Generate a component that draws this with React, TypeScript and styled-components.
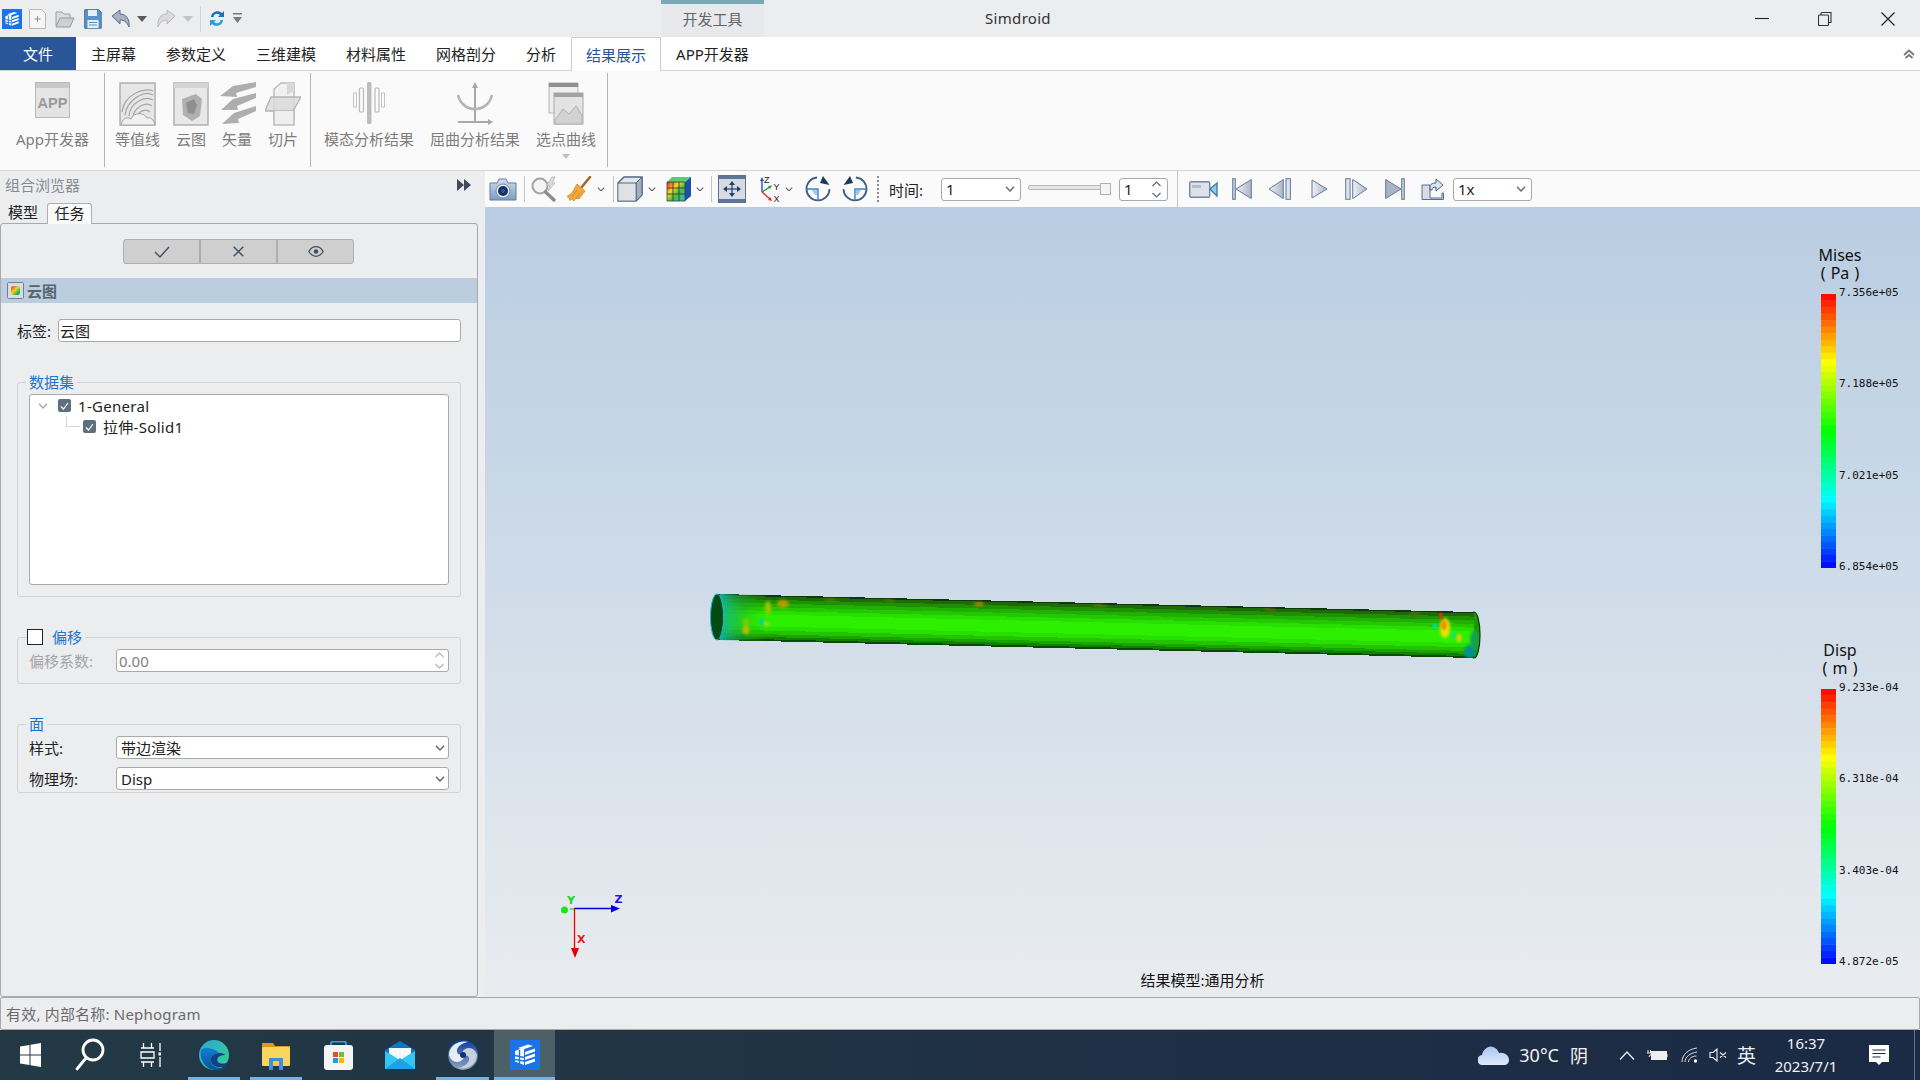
import React from "react";
import styled, { createGlobalStyle } from "styled-components";

const GlobalStyle = createGlobalStyle`
  html, body { margin: 0; padding: 0; background: #ecedef; }
  * { box-sizing: border-box; }
  body { font-family: "Noto Sans", "Noto Sans CJK SC", sans-serif; font-size: 15px; color: #222; }
`;

const Root = styled.div`
  width: 1920px; height: 1080px; display: flex; flex-direction: column; overflow: hidden;
`;
const TitleBar = styled.div`
  height: 37px; display: flex; background: #ecedef; flex: none;
`;
const QuickAccess = styled.div`
  width: 661px; display: flex; align-items: center; padding-left: 2px;
`;
const QuickButton = styled.span<{ $w: number; $ml?: number }>`
  width: ${p => p.$w}px; margin-left: ${p => p.$ml ?? 0}px; display: flex; justify-content: center; align-items: center; flex: none;
`;
const QuickSep = styled.span<{ $ml: number }>`
  width: 1px; height: 26px; margin-left: ${p => p.$ml}px; background: #cfd1d4; flex: none;
`;
const ContextTab = styled.div`
  width: 103px; border-top: 4px solid #79a9b6; background: #e7e9ec; color: #666; display: flex;
  align-items: center; justify-content: center; font-size: 15px; padding-bottom: 5px;
`;
const AppTitle = styled.div`
  width: 508px; display: flex; align-items: center; justify-content: center; color: #333; font-size: 15px; letter-spacing: .3px; padding-bottom: 1px;
`;
const WindowButtons = styled.div`
  margin-left: auto; display: flex; padding-right: 1px;
`;
const WindowButton = styled.div`
  width: 63px; height: 37px; display: flex; align-items: center; justify-content: center;
`;
const TabRow = styled.div`
  height: 34px; flex: none; display: flex; background: #fff; border-bottom: 1px solid #d5d5d5; position: relative;
`;
const FileTab = styled.div`
  width: 76px; height: 33px; background: #2a5599; color: #fff; display: flex; align-items: center; justify-content: center;
`;
const RibbonTab = styled.div<{ $active?: boolean }>`
  height: ${p => (p.$active ? 34 : 33)}px; padding: 0 ${p => (p.$active ? 14 : 15)}px; display: flex; align-items: center; flex: none;
  color: ${p => (p.$active ? "#2a5599" : "#222")}; background: #fff;
  border-left: ${p => (p.$active ? "1px solid #cfcfcf" : "none")};
  border-right: ${p => (p.$active ? "1px solid #cfcfcf" : "none")};
  border-top: ${p => (p.$active ? "1px solid #cfcfcf" : "none")};
`;
const CollapseButton = styled.div`
  margin-left: auto; margin-right: 5px; display: flex; align-items: center;
`;
const Ribbon = styled.div`
  height: 100px; flex: none; display: flex; background: #fafafa; border-bottom: 1px solid #d4d4d4; padding-top: 2px; padding-bottom: 3px;
`;
const RibbonGroup = styled.div<{ $w: number; $pl: number }>`
  width: ${p => p.$w}px; padding-left: ${p => p.$pl}px; display: flex; gap: 16px; border-right: 1px solid #b5b5b5; flex: none;
`;
const RibbonItem = styled.div`
  display: flex; flex-direction: column; align-items: center; color: #7d7d7d; font-size: 15px; flex: none; position: relative;
`;
const RibbonIconBox = styled.div`
  width: 0; height: 45px; margin-top: 9px; display: flex; align-items: flex-start; justify-content: center;
  & > svg { flex: none; }
`;
const RibbonLabel = styled.div`
  line-height: 22px; margin-top: 1px; white-space: nowrap;
`;
const RibbonCaret = styled.div`
  width: 0; height: 0; border-left: 4px solid transparent; border-right: 4px solid transparent; border-top: 5px solid #bdbdbd; margin-top: 4px;
`;
const Main = styled.div`
  height: 826px; flex: none; display: flex; background: #ecedef;
`;
const Panel = styled.div`
  width: 478px; flex: none; display: flex; flex-direction: column;
`;
const PanelHeader = styled.div`
  height: 29px; display: flex; align-items: center; justify-content: space-between; padding: 0 7px 2px 5px; color: #858b92; flex: none;
`;
const PanelTabs = styled.div`
  height: 24px; display: flex; align-items: flex-end; padding-left: 8px; flex: none; position: relative; z-index: 1;
`;
const PanelTab = styled.div<{ $active?: boolean }>`
  width: ${p => (p.$active ? 45 : 39)}px; height: 21px; line-height: 19px; text-align: ${p => (p.$active ? "center" : "left")};
  background: ${p => (p.$active ? "#fafafa" : "transparent")}; color: #222;
  border: ${p => (p.$active ? "1px solid #b0b0b0" : "none")}; border-bottom: none; border-radius: 3px 3px 0 0;
`;
const PanelBox = styled.div`
  margin-top: -1px; width: 478px; flex: 1; border: 1px solid #aaa; border-radius: 3px; padding-top: 15px; display: flex; flex-direction: column; min-height: 0;
`;
const ButtonGroup = styled.div`
  width: 231px; height: 25px; margin-left: 122px; display: flex; background: #cfcfcf; border: 1px solid #aeaeae; border-radius: 3px; flex: none;
`;
const TaskButton = styled.div`
  flex: 1; display: flex; align-items: center; justify-content: center;
  & + & { border-left: 2px solid #aeaeae; }
`;
const TaskHeader = styled.div`
  height: 25px; margin-top: 14px; background: #bacee0; display: flex; align-items: center; gap: 3px; padding-left: 6px; color: #5a646f; font-weight: 700; flex: none;
`;
const LabelRow = styled.div`
  height: 23px; margin: 16px 16px 0 16px; display: flex; align-items: center; flex: none;
`;
const RowLabel = styled.div<{ $w: number; $disabled?: boolean }>`
  width: ${p => p.$w}px; flex: none; color: ${p => (p.$disabled ? "#a5a5a5" : "#222")};
`;
const Field = styled.div<{ $muted?: boolean; $pl: number }>`
  flex: 1; height: 23px; background: #fff; border: 1px solid #a9a9a9; border-radius: 3px; display: flex; align-items: center; justify-content: space-between;
  padding: 0 3px 0 ${p => p.$pl}px; color: ${p => (p.$muted ? "#808080" : "#222")}; min-width: 0;
`;
const Group = styled.fieldset<{ $h: number; $mt: number }>`
  height: ${p => p.$h}px; margin: ${p => p.$mt}px 16px 0 16px; padding: 0 11px; border: 1px solid #d0d2d5; border-radius: 3px; min-width: 0; flex: none; display: block;
`;
const GroupLegend = styled.legend<{ $check?: boolean }>`
  height: 20px; line-height: 20px; padding: 0 3px; margin-left: ${p => (p.$check ? -2 : -3)}px; color: #1d74cc; display: flex; align-items: center; gap: 9px; margin-bottom: 0;
`;
const PlainBox = styled.span`
  width: 16px; height: 16px; background: #fff; border: 1px solid #222; flex: none; margin-left: -3px;
`;
const Tree = styled.div`
  height: 191px; margin-top: 2px; background: #fff; border: 1px solid #aaa; border-radius: 3px; letter-spacing: .3px;
`;
const TreeRow = styled.div<{ $indent: number }>`
  height: 21px; display: flex; align-items: center; padding-left: ${p => p.$indent}px; position: relative;
`;
const TreeToggle = styled.span`
  width: 20px; display: flex; flex: none;
`;
const TreeLine = styled.span`
  width: 14px; height: 11px; margin-top: -11px; border-left: 1px solid #d6d6d6; border-bottom: 1px solid #d6d6d6; margin-right: 3px; flex: none;
`;
const TreeCheck = styled.span`
  width: 13px; height: 13px; background: #5f6f7c; border-radius: 2px; margin-right: 7px; display: flex; align-items: center; justify-content: center; flex: none;
`;
const FormRow = styled.div<{ $mt: number }>`
  height: 23px; margin-top: ${p => p.$mt}px; display: flex; align-items: center;
`;
const StatusBar = styled.div`
  height: 33px; flex: none; background: #ecedef; border: 1px solid #a9a9a9; border-radius: 2px; display: flex; align-items: center; padding-left: 5px; color: #6a6a6a; letter-spacing: .2px;
`;
const Gutter = styled.div`
  width: 7px; flex: none;
`;
const Workspace = styled.div`
  flex: 1; display: flex; flex-direction: column; min-width: 0;
`;
const Toolbar = styled.div`
  height: 36px; flex: none; background: #fafafa; display: flex; align-items: center;
`;
const ToolButton = styled.span<{ $w: number; $ml: number }>`
  width: ${p => p.$w}px; margin-left: ${p => p.$ml}px; display: flex; align-items: center; justify-content: center; flex: none;
`;
const ToolSep = styled.span<{ $ml: number; $dotted?: boolean; $h?: number }>`
  width: 0; height: ${p => p.$h ?? 26}px; margin-left: ${p => p.$ml}px; border-left: ${p => (p.$dotted ? "2px dotted #8a8a8a" : "1px solid #c4c4c4")}; flex: none;
`;
const ToolLabel = styled.span<{ $ml: number }>`
  margin-left: ${p => p.$ml}px; width: 34px; flex: none; white-space: nowrap;
`;
const ToolCombo = styled.div<{ $w: number; $ml: number }>`
  width: ${p => p.$w}px; margin-left: ${p => p.$ml}px; height: 23px; background: #fff; border: 1px solid #a9a9a9; border-radius: 3px;
  display: flex; align-items: center; justify-content: space-between; padding: 0 5px 0 4px; flex: none;
`;
const Slider = styled.div`
  width: 83px; margin-left: 7px; height: 14px; position: relative; flex: none; display: flex; align-items: center; justify-content: flex-end;
  &::before { content: ""; position: absolute; left: 0; right: 0; top: 3px; height: 3px; background: #e6e6e6; border: 1px solid #b9b9b9; border-radius: 2px; }
`;
const SliderThumb = styled.span`
  width: 11px; height: 12px; background: #f4f4f4; border: 1px solid #b0b0b0; position: relative;
`;
const Viewport = styled.div`
  flex: 1; position: relative; background: linear-gradient(180deg, #b9cde2 0%, #d1dde9 52%, #e9ecef 100%); overflow: hidden;
`;
const TubeCanvas = styled.svg`
  position: absolute; left: 225px; top: 380px;
`;
const TriadCanvas = styled.svg`
  position: absolute; left: 65px; top: 674px;
`;
const Caption = styled.div`
  position: absolute; left: 0; right: 0; bottom: 7px; text-align: center; color: #111; font-size: 15px;
`;
const Legend = styled.div<{ $top: number }>`
  position: absolute; left: 1315px; top: ${p => p.$top}px; width: 80px;
`;
const LegendTitle = styled.div`
  height: 36px; text-align: center; line-height: 18px; font-size: 16px; color: #111; width: 80px; word-spacing: 1px;
`;
const LegendBody = styled.div`
  margin-top: 12px; display: flex; padding-left: 21px;
`;
const LegendLabels = styled.div<{ $h: number }>`
  height: ${p => p.$h}px; margin: -8px 0 0 3px; display: flex; flex-direction: column; justify-content: space-between;
  font-family: "DejaVu Sans Mono", monospace; font-size: 11px; line-height: 14px; color: #111; white-space: nowrap;
`;
const Taskbar = styled.div`
  height: 50px; flex: none; display: flex; align-items: stretch; color: #fff;
  background: linear-gradient(90deg, #233a45 0%, #1f3145 50%, #1b2a45 100%);
`;
const TaskSlot = styled.div<{ $w: number; $ml?: number; $state?: "open" | "active" }>`
  width: ${p => p.$w}px; margin-left: ${p => p.$ml ?? 0}px; flex: none; display: flex; align-items: center; justify-content: center; position: relative;
  background: ${p => (p.$state === "active" ? "#4c6068" : "transparent")};
  ${p => (p.$state ? `&::after { content: ""; position: absolute; bottom: 0; height: 3px; background: #76b3e2; left: ${p.$state === "active" ? 0 : 5}px; right: ${p.$state === "active" ? 0 : 5}px; }` : "")}
`;
const Tray = styled.div`
  margin-left: auto; display: flex; align-items: center; padding-right: 5px; border-right: 1px solid #6a7480; margin-right: 5px; height: 50px;
`;
const TrayItem = styled.span<{ $ml: number }>`
  margin-left: ${p => p.$ml}px; display: flex; align-items: center; flex: none;
`;
const TrayText = styled.span<{ $ml: number; $size: number }>`
  margin-left: ${p => p.$ml}px; font-size: ${p => p.$size}px; flex: none; white-space: nowrap; color: #f2f2f2;
`;
const Clock = styled.div`
  margin-left: 18px; width: 64px; text-align: center; font-size: 15px; line-height: 23px; white-space: nowrap; flex: none; color: #f2f2f2;
`;

/* ----- small chevrons ----- */
const Chevron = ({ size = 9, color = "#5c6a7c", up = false }: { size?: number; color?: string; up?: boolean }) => (
  <svg width={size} height={size * 0.6} viewBox="0 0 10 6"><path d={up ? "M1 5.2 5 1l4 4.2" : "M1 .8 5 5l4-4.2"} fill="none" stroke={color} strokeWidth="1.4" /></svg>
);
const Spinner = ({ color }: { color: string }) => (
  <svg width="11" height="19" viewBox="0 0 11 19"><path d="M1.5 6 5.5 2l4 4M1.5 13l4 4 4-4" fill="none" stroke={color} strokeWidth="1.2" /></svg>
);

/* ----- logo ----- */
const SimLogo = ({ s }: { s: number }) => (
  <svg width={s} height={s} viewBox="0 0 30 30">
    <rect width="30" height="30" fill="#1a73e8" />
    <path d="M5 11 14 7.5V25L5 21.5Z" fill="#fff" />
    <path d="M8 8 18 4.5l5 1.5-10 3.5Z" fill="#fff" />
    <path d="M5 15.5l9 2M5 19.5l9 1.5M9.5 10v14" stroke="#1a73e8" strokeWidth="1.4" fill="none" />
    <path d="M15 12l10-3.5v3L15 15ZM15 17l10-3.5v3L15 20ZM15 22l10-3.5v3L15 25Z" fill="#fff" />
  </svg>
);

/* ----- ribbon icons (disabled, grey) ----- */
const AppIcon = () => (
  <svg width="35" height="36" viewBox="0 0 35 36">
    <rect x=".5" y=".5" width="34" height="35" fill="#e4e4e4" stroke="#b9b9b9" />
    <rect x="1" y="1" width="33" height="5" fill="#c9c9c9" />
    <text x="17.5" y="26" textAnchor="middle" fontFamily="Liberation Sans" fontSize="14.5" fontWeight="700" fill="#9a9a9a">APP</text>
  </svg>
);
const ContourIcon = () => (
  <svg width="37" height="44" viewBox="0 0 37 44">
    <rect x="1" y="1" width="35" height="42" fill="#e6e6e6" stroke="#b0b0b0" strokeWidth="1.5" />
    <g fill="none" stroke="#a8a8a8" strokeWidth="1.3">
      <path d="M3 30C5 12 26 5 34 9" /><path d="M6 33C8 17 26 8 34 13" /><path d="M10 34C11 21 26 13 34 18" /><path d="M14 35C15 26 26 19 33 24" /><path d="M18 36c1-7 9-10 13-6" />
    </g>
    <path d="M2 43c1-6 6-9 10-6 3-7 13-7 16-1 3-1 7 1 8 7Z" fill="#f1f1f1" stroke="#a2a2a2" />
  </svg>
);
const NephIcon = () => (
  <svg width="36" height="44" viewBox="0 0 36 44">
    <rect x="1" y="1" width="34" height="42" fill="#e8e8e8" stroke="#b0b0b0" strokeWidth="1.5" />
    <rect x="1" y="1" width="34" height="5" fill="#d4d4d4" />
    <path d="M9 17 23 12l6 5-2 17-8 5-9-6Z" fill="#b0b0b0" />
    <path d="M13 21 21 17l3 6-3 9-6-1Z" fill="#8f8f8f" />
  </svg>
);
const VectorIcon = () => (
  <svg width="37" height="44" viewBox="0 0 37 44" fill="#aeaeae">
    <path d="M14 4 37 0v5L17 11l1 4L1 14Z" /><path d="M14 17 37 11v5L18 24l1 4L2 28Z" /><path d="M15 31 37 24v5L19 37l1 4-17 1Z" />
  </svg>
);
const SliceIcon = () => (
  <svg width="36" height="44" viewBox="0 0 36 44">
    <path d="M9 7 16 1h13v36H9Z" fill="#f1f1f1" stroke="#bcbcbc" strokeWidth="1.5" />
    <path d="M22 1l7 0v8l-7 4Z" fill="#d8d8d8" />
    <path d="M6 15h30l-8 14H0Z" fill="#d9d9d9" fillOpacity=".8" stroke="#b4b4b4" strokeWidth="1.3" />
    <path d="M9 29v14h20V29" fill="#efefef" stroke="#bcbcbc" strokeWidth="1.5" />
  </svg>
);
const ModalIcon = () => (
  <svg width="32" height="44" viewBox="0 0 32 44" fill="#bcbcbc">
    <rect x="14" y="0" width="4.5" height="42" rx="1.5" />
    <rect x="6.5" y="6" width="4" height="24" rx="1" fill="none" stroke="#b9b9b9" strokeWidth="1.2" />
    <rect x="22" y="6" width="4" height="24" rx="1" fill="none" stroke="#b9b9b9" strokeWidth="1.2" />
    <rect x="0.5" y="11" width="3" height="14" fill="none" stroke="#c4c4c4" />
    <rect x="28.5" y="11" width="3" height="14" fill="none" stroke="#c4c4c4" />
  </svg>
);
const BuckleIcon = () => (
  <svg width="36" height="44" viewBox="0 0 36 44" fill="none" stroke="#a8a8a8" strokeWidth="2">
    <path d="M18 4V40M1 40H33" />
    <path d="M18 0l-3 6h6ZM36 40l-5-3v6Z" fill="#a8a8a8" stroke="none" />
    <path d="M1 13c2 9 9 14 17 14s15-5 17-14" strokeWidth="2.6" stroke="#b4b4b4" />
  </svg>
);
const CurveIcon = () => (
  <svg width="36" height="44" viewBox="0 0 36 44">
    <rect x="1" y="1" width="29" height="30" fill="#efefef" stroke="#b4b4b4" />
    <rect x="1" y="1" width="29" height="4" fill="#8f8f8f" />
    <rect x="6" y="11" width="29" height="31" fill="#e3e3e3" stroke="#a8a8a8" />
    <rect x="6" y="11" width="29" height="4" fill="#a2a2a2" />
    <path d="M7 38 15 27l6 5 7-8 6 9v9H7Z" fill="#d2d2d2" stroke="#b0b0b0" />
  </svg>
);

/* ----- toolbar icons ----- */
const CameraIcon = () => (
  <svg width="28" height="23" viewBox="0 0 28 23">
    <defs><linearGradient id="camB" x1="0" y1="0" x2="0" y2="1"><stop offset="0" stopColor="#cfdded" /><stop offset="1" stopColor="#7f9cc0" /></linearGradient></defs>
    <path d="M1 5h7l2-4h7l2 4h8v17H1Z" fill="url(#camB)" stroke="#5f7fa6" />
    <circle cx="14" cy="13" r="7" fill="#e8eef5" stroke="#6d89ab" />
    <circle cx="14" cy="13" r="5" fill="#17315f" />
    <circle cx="14" cy="13" r="2" fill="#2a58a8" />
  </svg>
);
const SearchBoltIcon = () => (
  <svg width="28" height="26" viewBox="0 0 28 26">
    <circle cx="10" cy="10" r="7.5" fill="#f5f5f5" stroke="#a3a3a3" strokeWidth="2" />
    <path d="M15.5 16 24 24" stroke="#8c8c8c" strokeWidth="3.4" strokeLinecap="round" />
    <path d="M22 1l-5 8h3l-2 6 7-8h-3l3-6Z" fill="#dedede" stroke="#bdbdbd" />
  </svg>
);
const BroomIcon = () => (
  <svg width="25" height="26" viewBox="0 0 25 26">
    <path d="M14 12 23 1" stroke="#a56a2b" strokeWidth="2.6" strokeLinecap="round" />
    <path d="M10 8 18 15 12 23 9 22 7 25 5 23 3 24.5 2 22 0 20.5 5 17Z" fill="#f2a93b" stroke="#d98a1e" strokeWidth=".8" />
    <path d="M5 21 10 14M9 23l4-6" stroke="#d98a1e" />
  </svg>
);
const BoxIcon = () => (
  <svg width="26" height="26" viewBox="0 0 26 26">
    <path d="M1 7 7 1h18v18l-6 6H1Z" fill="#e4e6ea" stroke="#4d6687" strokeWidth="1.4" />
    <path d="M19 7 25 1v18l-6 6Z" fill="#a3aebd" stroke="#4d6687" />
    <path d="M1 7h18v18" fill="none" stroke="#4d6687" />
    <path d="M1.5 8h17v16.5h-17Z" fill="#dfe1e5" />
  </svg>
);
const RainbowCube = () => (
  <svg width="26" height="26" viewBox="0 0 26 26">
    <defs><linearGradient id="rbw" x1="0" y1="0" x2="1" y2="1">
      <stop offset="0" stopColor="#e8272a" /><stop offset=".35" stopColor="#f7d42a" /><stop offset=".6" stopColor="#3dc23b" /><stop offset="1" stopColor="#2dbbe0" />
    </linearGradient></defs>
    <path d="M1 6h18v19H1Z" fill="url(#rbw)" />
    <path d="M1 6 6 1h19l-6 5Z" fill="#5fcb6a" />
    <path d="M19 6l6-5v19l-6 5Z" fill="#1b4fb0" />
    <path d="M7 6v19M13 6v19M1 12h18M1 18h18" stroke="#3a3a3a" strokeWidth=".9" fill="none" />
    <path d="M1 6h18v19H1Z" fill="none" stroke="#3a3a3a" strokeWidth=".8" />
  </svg>
);
const FitIcon = () => (
  <svg width="28" height="28" viewBox="0 0 28 28">
    <rect x=".5" y=".5" width="27" height="27" fill="#d7dbe2" stroke="#5a7195" />
    <rect x="1" y="1" width="26" height="3" fill="#5f7697" />
    <rect x="1" y="24" width="26" height="3" fill="#5f7697" />
    <g fill="#1f3f6e">
      <path d="M14 6l-3 4h6ZM14 22l-3-4h6ZM5 14l4-3v6ZM23 14l-4-3v6Z" />
      <rect x="13.4" y="9" width="1.2" height="10" /><rect x="8" y="13.4" width="12" height="1.2" />
    </g>
  </svg>
);
const AxesIcon = () => (
  <svg width="24" height="29" viewBox="0 0 24 29">
    <path d="M4 17V5" stroke="#2b55c8" strokeWidth="1.4" /><path d="M4 2 2 6h4Z" fill="#2b55c8" />
    <path d="M4 17 12 12" stroke="#1c9c3c" strokeWidth="1.4" /><path d="M14 10.500l-4 .5 2 3Z" fill="#1c9c3c" />
    <path d="M4 17 12 24" stroke="#d9302e" strokeWidth="1.4" /><path d="M14 26l-1.500-4-2.500 3Z" fill="#d9302e" />
    <g fontFamily="Liberation Sans" fontSize="9" fill="#222">
      <text x="6" y="8">Z</text><text x="15.500" y="15">Y</text><text x="15.500" y="27">X</text>
    </g>
  </svg>
);
const RotIcon = ({ flip }: { flip?: boolean }) => (
  <svg width="26" height="26" viewBox="0 0 26 26" style={flip ? { transform: "scaleX(-1)" } : undefined}>
    <path d="M12 1.5A11.5 11.5 0 1 0 24.5 13" fill="none" stroke="#3d5f86" strokeWidth="1.8" />
    <path d="M1.5 13H13V24.5" fill="none" stroke="#3d82b8" strokeWidth="1.4" />
    <path d="M7 14h5v5h-2Z" fill="#9fc6e6" />
    <path d="M24.5 9 15 7l3-7Z" fill="#1e3a60" />
  </svg>
);
const MovieIcon = () => (
  <svg width="29" height="17" viewBox="0 0 29 17">
    <rect x=".7" y=".7" width="20" height="15.6" rx="1.5" fill="#dde2e9" stroke="#7186a3" strokeWidth="1.4" />
    <rect x="3" y="4" width="9" height="3" fill="#b4bdc9" />
    <path d="M21 8 28 2v13Z" fill="#8fd0e6" stroke="#3f7da8" strokeWidth="1.4" />
  </svg>
);
const PG = () => (
  <defs><linearGradient id="pgr" x1="0" y1="0" x2="1" y2="0"><stop offset="0" stopColor="#f0f3f7" /><stop offset="1" stopColor="#aab4c4" /></linearGradient></defs>
);
const PlayFirst = () => (
  <svg width="20" height="22" viewBox="0 0 20 22"><PG /><rect x=".7" y=".7" width="2.6" height="20.6" fill="#c9d1dc" stroke="#62799b" /><path d="M19.3 1.5V20.5L4 11Z" fill="url(#pgr)" stroke="#62799b" /></svg>
);
const PlayPrev = () => (
  <svg width="23" height="22" viewBox="0 0 23 22"><PG /><path d="M15.3 1.5V20.5L1 11Z" fill="url(#pgr)" stroke="#62799b" /><rect x="18" y=".7" width="4.4" height="20.6" fill="#dde2e9" stroke="#62799b" /></svg>
);
const PlayPlay = () => (
  <svg width="17" height="20" viewBox="0 0 17 20"><PG /><path d="M1 1V19L16 10Z" fill="url(#pgr)" stroke="#62799b" /></svg>
);
const PlayNext = () => (
  <svg width="23" height="22" viewBox="0 0 23 22"><PG /><rect x=".7" y=".7" width="4.4" height="20.6" fill="#dde2e9" stroke="#62799b" /><path d="M7.7 1.5V20.5L22 11Z" fill="url(#pgr)" stroke="#62799b" /></svg>
);
const PlayLast = () => (
  <svg width="20" height="22" viewBox="0 0 20 22"><PG /><path d="M.7 1.5V20.5L16 11Z" fill="#a9b3c2" stroke="#62799b" /><rect x="16.7" y=".7" width="2.6" height="20.6" fill="#c9d1dc" stroke="#62799b" /></svg>
);
const ExportIcon = () => (
  <svg width="23" height="22" viewBox="0 0 23 22">
    <path d="M1 7h8v13h12v-5h1.5v6.500H1Z" fill="#d6dce5" stroke="#56708f" />
    <path d="M9 9c0-3 3-4 6-4V1l7 6-7 6V9c-3 0-4 1-4 3H9Z" fill="#dfe5ec" stroke="#3f6187" />
  </svg>
);

/* ----- quick access icons ----- */
const NewIcon = () => (
  <svg width="17" height="20" viewBox="0 0 17 20"><path d="M.5.5h12l4 4v15H.5Z" fill="#f6f6f6" stroke="#b8b8b8" /><path d="M8.500 7v6M5.500 10h6" stroke="#8f8f8f" /></svg>
);
const OpenIcon = () => (
  <svg width="20" height="18" viewBox="0 0 20 18"><path d="M1 16V2h6l2 2h6v4" fill="#dbdbdb" stroke="#a0a0a0" /><path d="M1 17 5 8h14l-4 9Z" fill="#cfcfcf" stroke="#9a9a9a" /></svg>
);
const SaveIcon = () => (
  <svg width="18" height="20" viewBox="0 0 18 20"><path d="M.7.700h14l2.500 2.500v16H.7Z" fill="#5d92c7" stroke="#3a6ea5" /><rect x="4" y="1" width="9" height="6" fill="#e6eef6" /><rect x="3.500" y="11" width="11" height="8" fill="#e6eef6" /><path d="M5 13.500h8M5 16h8" stroke="#5d92c7" /></svg>
);
const UndoIcon = ({ flip, dim }: { flip?: boolean; dim?: boolean }) => (
  <svg width="20" height="20" viewBox="0 0 20 20" style={flip ? { transform: "scaleX(-1)" } : undefined}>
    <path d="M1 7 9 1v4c6 0 10 5 9 13-2-5-5-7-9-7v4Z" fill={dim ? "#dcdcdc" : "#a6b1c1"} stroke={dim ? "#b9b9b9" : "#5b6e89"} />
  </svg>
);
const TinyCaret = ({ color }: { color: string }) => (
  <svg width="10" height="6" viewBox="0 0 10 6"><path d="M0 0h10L5 6Z" fill={color} /></svg>
);
const RefreshIcon = () => (
  <svg width="16" height="19" viewBox="0 0 16 19">
    <path d="M2 8C2 3 9 0 13 4l2-2v6H9l2-2C8 3.500 4.500 5 4.500 8Z" fill="#1c6fb3" />
    <path d="M14 11c0 5-7 8-11 4l-2 2v-6h6l-2 2c3 2.500 6.500 1 6.500-2Z" fill="#2a9fd0" />
  </svg>
);
const Customize = () => (
  <svg width="9" height="11" viewBox="0 0 9 11"><path d="M0 0h9v1.500H0ZM0 4h9L4.500 10Z" fill="#7a7a7a" /></svg>
);

/* ----- taskbar icons ----- */
const WinLogo = () => (
  <svg width="21" height="24" viewBox="0 0 21 24" fill="#fff"><path d="M0 3.500 9.500 2v9.500H0ZM10.500 1.800 21 0v11.500H10.500ZM0 12.500h9.500V22L0 20.500ZM10.500 12.500H21V24L10.500 22.200Z" /></svg>
);
const SearchGlass = () => (
  <svg width="30" height="34" viewBox="0 0 30 34" fill="none" stroke="#fff" strokeWidth="2.800"><circle cx="18" cy="12" r="10" /><path d="M11 20 2 31" strokeLinecap="round" /></svg>
);
const TaskView = () => (
  <svg width="21" height="24" viewBox="0 0 21 24" fill="none" stroke="#fff" strokeWidth="1.300"><path d="M1 5h13M3.500 5V0M11.500 5V0M1 9h13v6H1ZM1 19h13M3.500 19v5M11.500 19v5M20 0v8M20 14v10" /><rect x="18.500" y="9.500" width="3" height="3" fill="#fff" stroke="none" /></svg>
);
const EdgeIcon = () => (
  <svg width="30" height="30" viewBox="0 0 30 30">
    <defs>
      <linearGradient id="edA" x1="0" y1="0" x2="1" y2="1"><stop offset="0" stopColor="#2aa8d8" /><stop offset="1" stopColor="#35d28a" /></linearGradient>
      <linearGradient id="edB" x1="0" y1="0" x2="0" y2="1"><stop offset="0" stopColor="#0f7fcf" /><stop offset="1" stopColor="#0b4f9e" /></linearGradient>
    </defs>
    <circle cx="15" cy="15" r="15" fill="url(#edA)" />
    <path d="M2 10C0 20 7 30 17 30c4 0 7-1 9-3-5 2-13 1-14-6-1-4 3-8 8-8-3-4-14-7-18-3Z" fill="url(#edB)" />
    <path d="M20 13c-5 0-9 4-8 8 1 6 8 7 13 6 2-2 3-3 4-5-3 2-8 2-10 0-2-3 0-7 7-7 0-1-3-2-6-2Z" fill="#123f86" />
  </svg>
);
const FolderIcon = () => (
  <svg width="28" height="29" viewBox="0 0 28 29">
    <path d="M0 2h11l2 3h15v5H0Z" fill="#d89a1a" />
    <rect y="6" width="28" height="19" rx="1.500" fill="#fbd65f" />
    <path d="M7 17h14v12h-4v-4h-6v4H7Z" fill="#3f8fd6" />
    <rect x="11" y="20" width="6" height="5" fill="#f6c847" />
  </svg>
);
const StoreIcon = () => (
  <svg width="29" height="29" viewBox="0 0 29 29">
    <path d="M7 6V2.500a2 2 0 0 1 2-2h11a2 2 0 0 1 2 2V6" fill="none" stroke="#29a7e0" strokeWidth="1.800" />
    <rect y="4" width="29" height="25" rx="3" fill="#f4f4f4" />
    <rect x="9" y="11" width="5" height="5" fill="#ea4c2b" /><rect x="15" y="11" width="5" height="5" fill="#7db83a" />
    <rect x="9" y="17" width="5" height="5" fill="#18a1e8" /><rect x="15" y="17" width="5" height="5" fill="#fbb414" />
  </svg>
);
const MailIcon = () => (
  <svg width="30" height="28" viewBox="0 0 30 28">
    <path d="M0 9 15 0l15 9v19H0Z" fill="#0f74c6" />
    <path d="M4 7h22v6l-11 7-11-7Z" fill="#f5f8fb" />
    <path d="M0 10 15 19 30 10v18H0Z" fill="#31c6f3" />
    <path d="M0 28 15 17 30 28Z" fill="#1da2e6" />
  </svg>
);
const SwirlIcon = () => (
  <svg width="30" height="30" viewBox="0 0 30 30">
    <defs><linearGradient id="swl" x1="0" y1="0" x2="0" y2="1"><stop offset="0" stopColor="#0b3ea2" /><stop offset="1" stopColor="#8fa3bf" /></linearGradient></defs>
    <circle cx="15" cy="15" r="15" fill="url(#swl)" />
    <path d="M1 15C1 6 10 0 20 2c-6 1-12 5-11 10 1 4 6 3 7-1 2 5-1 11-7 11-4 0-7-3-8-7Z" fill="#e8edf3" />
    <path d="M29 15c0 9-9 15-19 13 6-1 12-5 11-10-1-4-6-3-7 1-2-5 1-11 7-11 4 0 7 3 8 7Z" fill="#c8d0dc" />
    <circle cx="15" cy="15" r="3" fill="#10307c" />
  </svg>
);

/* ----- tray icons ----- */
const CloudIcon = () => (
  <svg width="31" height="20" viewBox="0 0 31 20"><defs><linearGradient id="cld" x1="0" y1="0" x2="0" y2="1"><stop offset="0" stopColor="#a7c8f2" /><stop offset="1" stopColor="#dfeaf8" /></linearGradient></defs>
    <path d="M5 20a5 5 0 0 1-1-10C5 4 11 0 15 2c3 1 5 3 6 6 5-1 10 2 10 7 0 3-2 5-5 5Z" fill="url(#cld)" /></svg>
);
const TrayChevron = () => (
  <svg width="16" height="9" viewBox="0 0 16 9" fill="none" stroke="#eee" strokeWidth="1.300"><path d="M1 8.500 8 1l7 7.500" /></svg>
);
const BatteryIcon = () => (
  <svg width="21" height="14" viewBox="0 0 21 14" fill="none" stroke="#eee"><rect x="4.500" y="3.500" width="15" height="8" fill="#eee" /><path d="M20 6v3M1 2v3M3.500 2v3M0 5h4.500v2H3L2 9" /></svg>
);
const WifiIcon = () => (
  <svg width="17" height="16" viewBox="0 0 17 16" fill="none" stroke="#ddd" strokeWidth="1"><path d="M1 15C1 8 7 2 16 1M4 15c0-5 5-9 12-10M7.500 15c0-3 3-6 8-6" /><circle cx="14.500" cy="14" r="1.700" fill="#fff" stroke="none" /></svg>
);
const MuteIcon = () => (
  <svg width="18" height="14" viewBox="0 0 18 14" fill="none" stroke="#eee" strokeWidth="1.100"><path d="M1 4.500h3L8 1v12L4 9.500H1ZM11 4.500l6 5M17 4.500l-6 5" /></svg>
);
const NotifyIcon = () => (
  <svg width="20" height="21" viewBox="0 0 20 21"><path d="M0 0h20v17h-7l-3 3-3-3H0Z" fill="#fff" /><path d="M3.500 5h13M3.500 8.500h13M3.500 12h8" stroke="#1b2a45" /></svg>
);

/* ----- viewport drawings ----- */
const bands: [number, string][] = [
  [0, "#0a3a07"], [3, "#1f6a06"], [10, "#1d9004"], [18, "#20b002"], [26, "#24c800"], [34, "#28e000"],
  [42, "#2cf000"], [68, "#28e000"], [77, "#22c400"], [85, "#1aa400"], [91, "#128005"], [96, "#0a4a06"], [100, ""],
];
const L = { t: 594, b: 640, x: 718 };
const R = { t: 612, b: 658, x: 1474 };
const Tube = () => (
  <TubeCanvas width="780" height="80" viewBox="710 587 780 80">
    <defs>
      <clipPath id="tubeClip"><path d="M718 594 1474 612C1480 618 1482 650 1473 658L718 640Z" /></clipPath>
      <linearGradient id="capFade" x1="0" y1="0" x2="1" y2="0">
        <stop offset="0" stopColor="#10b8a8" stopOpacity=".9" /><stop offset=".5" stopColor="#18a840" stopOpacity=".45" /><stop offset="1" stopColor="#20d000" stopOpacity="0" />
      </linearGradient>
      <filter id="b2" x="-100%" y="-100%" width="300%" height="300%"><feGaussianBlur stdDeviation="1.800" /></filter>
      <filter id="b1" x="-100%" y="-100%" width="300%" height="300%"><feGaussianBlur stdDeviation=".9" /></filter>
    </defs>
    <ellipse cx="1474" cy="635" rx="6" ry="23" fill="#1a9a02" stroke="#0a3a07" strokeWidth="1.200" />
    {bands.slice(0, -1).map(([p, c], i) => {
      const a = p / 100;
      const d = bands[i + 1][0] / 100;
      const y = (s: { t: number; b: number }, f: number) => s.t + (s.b - s.t) * f;
      return (
        <polygon key={i} fill={c} shapeRendering="crispEdges"
          points={`${L.x},${y(L, a)} ${R.x},${y(R, a)} ${R.x},${y(R, d)} ${L.x},${y(L, d)}`} />
      );
    })}
    <g clipPath="url(#tubeClip)">
      <rect x="720" y="590" width="46" height="55" fill="url(#capFade)" />
      <g filter="url(#b2)">
        <ellipse cx="783" cy="604" rx="6" ry="4" fill="#b89c00" />
        <ellipse cx="768" cy="608" rx="3" ry="7" fill="#a8c000" />
        <ellipse cx="746" cy="630" rx="3.500" ry="4" fill="#c8b800" />
        <ellipse cx="746" cy="622" rx="3.500" ry="4" fill="#70d000" />
        <ellipse cx="762" cy="622" rx="1.800" ry="4" fill="#00c8b0" />
        <ellipse cx="767" cy="624" rx="2" ry="2.500" fill="#c0d800" />
        <ellipse cx="979" cy="604" rx="5" ry="2.200" fill="#a88800" />
        <ellipse cx="830" cy="600" rx="6" ry="1.500" fill="#5a8000" />
        <ellipse cx="890" cy="601" rx="6" ry="1.500" fill="#4a8000" />
        <ellipse cx="1100" cy="606" rx="8" ry="1.500" fill="#5a8000" />
        <ellipse cx="1270" cy="610" rx="6" ry="1.500" fill="#706c00" />
        <ellipse cx="1415" cy="614" rx="6" ry="1.500" fill="#606c00" />
      </g>
      <ellipse cx="1470" cy="652" rx="6" ry="7" fill="#009090" filter="url(#b2)" />
      <ellipse cx="1475" cy="640" rx="5" ry="10" fill="#18a050" filter="url(#b2)" />
      <ellipse cx="1445" cy="628" rx="5" ry="10" fill="#f0e000" filter="url(#b2)" />
      <ellipse cx="1444" cy="625" rx="3" ry="5" fill="#f09000" filter="url(#b1)" />
      <ellipse cx="1441" cy="616" rx="2" ry="3.500" fill="#c84800" filter="url(#b1)" />
      <ellipse cx="1435" cy="626" rx="2" ry="2.500" fill="#00d8f0" filter="url(#b1)" />
      <ellipse cx="1454" cy="635" rx="1.500" ry="3" fill="#00d8c0" filter="url(#b1)" />
      <ellipse cx="1459" cy="638" rx="2.500" ry="4" fill="#f0c800" filter="url(#b1)" />
    </g>
    <ellipse cx="717" cy="617" rx="6.500" ry="23" fill="#054a10" stroke="#14b8dc" strokeWidth="1" />
  </TubeCanvas>
);

const rainbow = (f: number) => {
  const seg = f * 4;
  const i = Math.min(3, Math.floor(seg));
  const t = Math.round((seg - i) * 255);
  return [`rgb(255,${t},0)`, `rgb(${255 - t},255,0)`, `rgb(0,255,${t})`, `rgb(0,${255 - t},255)`][i];
};
const ColorBar = ({ h }: { h: number }) => {
  const n = 42;
  return (
    <svg width="15" height={h} viewBox={`0 0 15 ${n}`} preserveAspectRatio="none" style={{ flex: "none" }}>
      {Array.from({ length: n }, (_, i) => (
        <rect key={i} x="0" y={i} width="15" height="1.050" fill={rainbow((i + 0.5) / n)} />
      ))}
    </svg>
  );
};

const Triad = () => (
  <TriadCanvas width="90" height="80" viewBox="550 880 90 80">
    <path d="M574 907.500H614" stroke="#0000dc" strokeWidth="1.300" />
    <path d="M611 904 620 907.500 611 911.500Z" fill="#0000dc" />
    <path d="M574.500 907V948" stroke="#f00000" strokeWidth="1.300" />
    <path d="M571 947H579L575 957Z" fill="#e80000" />
    <path d="M570 908H574" stroke="#18d818" strokeWidth="1.300" />
    <circle cx="564.500" cy="909" r="3.500" fill="#18e818" />
    <g fontFamily="DejaVu Sans" fontSize="11" fontWeight="700">
      <text x="567" y="903" fill="#18d818">Y</text>
      <text x="614.500" y="902" fill="#1818e0">Z</text>
      <text x="577" y="942" fill="#e81818">X</text>
    </g>
  </TriadCanvas>
);

const Check = () => (
  <svg width="9" height="8" viewBox="0 0 9 8"><path d="M1 4.500 3.500 7 8 1" fill="none" stroke="#fff" strokeWidth="1.200" /></svg>
);

export default function App() {
  return (
    <Root>
      <GlobalStyle />
      <TitleBar>
        <QuickAccess>
          <QuickButton $w={20}><SimLogo s={20} /></QuickButton>
          <QuickButton $w={17} $ml={7}><NewIcon /></QuickButton>
          <QuickButton $w={20} $ml={9}><OpenIcon /></QuickButton>
          <QuickButton $w={18} $ml={9}><SaveIcon /></QuickButton>
          <QuickButton $w={20} $ml={9}><UndoIcon /></QuickButton>
          <QuickButton $w={10} $ml={6}><TinyCaret color="#5b5b5b" /></QuickButton>
          <QuickButton $w={20} $ml={9}><UndoIcon flip dim /></QuickButton>
          <QuickButton $w={10} $ml={7}><TinyCaret color="#c4c4c4" /></QuickButton>
          <QuickSep $ml={7} />
          <QuickButton $w={16} $ml={8}><RefreshIcon /></QuickButton>
          <QuickButton $w={9} $ml={8}><Customize /></QuickButton>
        </QuickAccess>
        <ContextTab>开发工具</ContextTab>
        <AppTitle>Simdroid</AppTitle>
        <WindowButtons>
          <WindowButton>
            <svg width="14" height="14" viewBox="0 0 14 14"><path d="M0 6.500h14" stroke="#222" strokeWidth="1.100" /></svg>
          </WindowButton>
          <WindowButton>
            <svg width="14" height="14" viewBox="0 0 14 14" fill="none" stroke="#333" strokeWidth="1.100"><rect x=".5" y="3" width="10" height="10.500" rx="1" /><path d="M3 3V1.500a1 1 0 0 1 1-1h9v10h-2.500" /></svg>
          </WindowButton>
          <WindowButton>
            <svg width="14" height="14" viewBox="0 0 14 14"><path d="M.5.5l13 13M13.500.5l-13 13" stroke="#222" strokeWidth="1.200" /></svg>
          </WindowButton>
        </WindowButtons>
      </TitleBar>

      <TabRow>
        <FileTab>文件</FileTab>
        <RibbonTab>主屏幕</RibbonTab>
        <RibbonTab>参数定义</RibbonTab>
        <RibbonTab>三维建模</RibbonTab>
        <RibbonTab>材料属性</RibbonTab>
        <RibbonTab>网格剖分</RibbonTab>
        <RibbonTab>分析</RibbonTab>
        <RibbonTab $active>结果展示</RibbonTab>
        <RibbonTab>APP开发器</RibbonTab>
        <CollapseButton>
          <svg width="12" height="10" viewBox="0 0 12 10" fill="none" stroke="#777" strokeWidth="1.800"><path d="M1 6 6 1.500 11 6M2.500 9 6 6l3.500 3" /></svg>
        </CollapseButton>
      </TabRow>

      <Ribbon>
        <RibbonGroup $w={105} $pl={16}>
          <RibbonItem>
            <RibbonIconBox><AppIcon /></RibbonIconBox>
            <RibbonLabel>App开发器</RibbonLabel>
          </RibbonItem>
        </RibbonGroup>
        <RibbonGroup $w={206} $pl={10}>
          <RibbonItem><RibbonIconBox><ContourIcon /></RibbonIconBox><RibbonLabel>等值线</RibbonLabel></RibbonItem>
          <RibbonItem><RibbonIconBox><NephIcon /></RibbonIconBox><RibbonLabel>云图</RibbonLabel></RibbonItem>
          <RibbonItem><RibbonIconBox><VectorIcon /></RibbonIconBox><RibbonLabel>矢量</RibbonLabel></RibbonItem>
          <RibbonItem><RibbonIconBox><SliceIcon /></RibbonIconBox><RibbonLabel>切片</RibbonLabel></RibbonItem>
        </RibbonGroup>
        <RibbonGroup $w={297} $pl={13}>
          <RibbonItem><RibbonIconBox><ModalIcon /></RibbonIconBox><RibbonLabel>模态分析结果</RibbonLabel></RibbonItem>
          <RibbonItem><RibbonIconBox><BuckleIcon /></RibbonIconBox><RibbonLabel>屈曲分析结果</RibbonLabel></RibbonItem>
          <RibbonItem><RibbonIconBox><CurveIcon /></RibbonIconBox><RibbonLabel>选点曲线</RibbonLabel><RibbonCaret /></RibbonItem>
        </RibbonGroup>
      </Ribbon>

      <Main>
        <Panel>
          <PanelHeader>
            <span>组合浏览器</span>
            <svg width="14" height="12" viewBox="0 0 14 12" fill="#3e4a5c"><path d="M0 0 7 6 0 12ZM7 0l7 6-7 6Z" /></svg>
          </PanelHeader>
          <PanelTabs>
            <PanelTab>模型</PanelTab>
            <PanelTab $active>任务</PanelTab>
          </PanelTabs>
          <PanelBox>
            <ButtonGroup>
              <TaskButton>
                <svg width="16" height="12" viewBox="0 0 16 12"><path d="M1 6l5 5 9-10" fill="none" stroke="#3f4e60" strokeWidth="1.400" /></svg>
              </TaskButton>
              <TaskButton>
                <svg width="11" height="11" viewBox="0 0 11 11"><path d="M.7.7l9.600 9.600M10.300.7.7 10.300" fill="none" stroke="#3f4e60" strokeWidth="1.400" /></svg>
              </TaskButton>
              <TaskButton>
                <svg width="16" height="11" viewBox="0 0 16 11" fill="none" stroke="#3f4e60" strokeWidth="1.300"><path d="M.8 5.500C3 2 5.500.7 8 .7s5 1.300 7.200 4.800C13 9 10.500 10.300 8 10.300S3 9 .8 5.500Z" /><circle cx="8" cy="5.500" r="2.200" fill="#3f4e60" stroke="none" /></svg>
              </TaskButton>
            </ButtonGroup>
            <TaskHeader>
              <svg width="17" height="17" viewBox="0 0 17 17">
                <defs><linearGradient id="hdr" x1="0" y1="0" x2="1" y2="1"><stop offset="0" stopColor="#e8302a" /><stop offset=".45" stopColor="#f6d21f" /><stop offset=".7" stopColor="#35c43a" /><stop offset="1" stopColor="#2a6bd8" /></linearGradient></defs>
                <rect x=".5" y=".5" width="16" height="16" rx="1" fill="#d9dde2" stroke="#6f8096" />
                <rect x="4" y="4" width="9" height="9" rx="2.500" fill="url(#hdr)" />
              </svg>
              云图
            </TaskHeader>
            <LabelRow>
              <RowLabel $w={41}>标签:</RowLabel>
              <Field $pl={1}>云图</Field>
            </LabelRow>
            <Group $h={225} $mt={30}>
              <GroupLegend>数据集</GroupLegend>
              <Tree>
                <TreeRow $indent={8}>
                  <TreeToggle><Chevron size={10} color="#a8a8a8" /></TreeToggle>
                  <TreeCheck><Check /></TreeCheck>1-General
                </TreeRow>
                <TreeRow $indent={36}>
                  <TreeLine />
                  <TreeCheck><Check /></TreeCheck>拉伸-Solid1
                </TreeRow>
              </Tree>
            </Group>
            <Group $h={57} $mt={30}>
              <GroupLegend $check><PlainBox />偏移</GroupLegend>
              <FormRow $mt={2}>
                <RowLabel $w={87} $disabled>偏移系数:</RowLabel>
                <Field $muted $pl={2}>0.00<Spinner color="#b4b4b4" /></Field>
              </FormRow>
            </Group>
            <Group $h={79} $mt={30}>
              <GroupLegend>面</GroupLegend>
              <FormRow $mt={2}>
                <RowLabel $w={87}>样式:</RowLabel>
                <Field $pl={4}>带边渲染<Chevron size={10} /></Field>
              </FormRow>
              <FormRow $mt={8}>
                <RowLabel $w={87}>物理场:</RowLabel>
                <Field $pl={4}>Disp<Chevron size={10} /></Field>
              </FormRow>
            </Group>
          </PanelBox>
        </Panel>
        <Gutter />
        <Workspace>
          <Toolbar>
            <ToolButton $w={28} $ml={4}><CameraIcon /></ToolButton>
            <ToolSep $ml={7} />
            <ToolButton $w={28} $ml={5}><SearchBoltIcon /></ToolButton>
            <ToolButton $w={25} $ml={9}><BroomIcon /></ToolButton>
            <ToolButton $w={8} $ml={5}><Chevron size={8} /></ToolButton>
            <ToolSep $ml={8} />
            <ToolButton $w={26} $ml={3}><BoxIcon /></ToolButton>
            <ToolButton $w={8} $ml={5}><Chevron size={8} /></ToolButton>
            <ToolButton $w={26} $ml={10}><RainbowCube /></ToolButton>
            <ToolButton $w={8} $ml={4}><Chevron size={8} /></ToolButton>
            <ToolSep $ml={7} />
            <ToolButton $w={28} $ml={6}><FitIcon /></ToolButton>
            <ToolButton $w={24} $ml={12}><AxesIcon /></ToolButton>
            <ToolButton $w={8} $ml={3}><Chevron size={8} /></ToolButton>
            <ToolButton $w={26} $ml={12}><RotIcon /></ToolButton>
            <ToolButton $w={26} $ml={11}><RotIcon flip /></ToolButton>
            <ToolSep $ml={9} $dotted />
            <ToolLabel $ml={10}>时间:</ToolLabel>
            <ToolCombo $w={80} $ml={18}>1<Chevron size={10} /></ToolCombo>
            <Slider><SliderThumb /></Slider>
            <ToolCombo $w={49} $ml={8}>1<Spinner color="#5c6a7c" /></ToolCombo>
            <ToolSep $ml={9} $h={36} />
            <ToolButton $w={29} $ml={11}><MovieIcon /></ToolButton>
            <ToolButton $w={20} $ml={14}><PlayFirst /></ToolButton>
            <ToolButton $w={23} $ml={16}><PlayPrev /></ToolButton>
            <ToolButton $w={17} $ml={20}><PlayPlay /></ToolButton>
            <ToolButton $w={23} $ml={17}><PlayNext /></ToolButton>
            <ToolButton $w={20} $ml={17}><PlayLast /></ToolButton>
            <ToolButton $w={23} $ml={16}><ExportIcon /></ToolButton>
            <ToolCombo $w={79} $ml={9}>1x<Chevron size={10} /></ToolCombo>
          </Toolbar>
          <Viewport>
            <Tube />
            <Triad />
            <Caption>结果模型:通用分析</Caption>
            <Legend $top={39}>
              <LegendTitle>Mises<br />( Pa )</LegendTitle>
              <LegendBody>
                <ColorBar h={274} />
                <LegendLabels $h={288}><span>7.356e+05</span><span>7.188e+05</span><span>7.021e+05</span><span>6.854e+05</span></LegendLabels>
              </LegendBody>
            </Legend>
            <Legend $top={434}>
              <LegendTitle>Disp<br />( m )</LegendTitle>
              <LegendBody>
                <ColorBar h={275} />
                <LegendLabels $h={288}><span>9.233e-04</span><span>6.318e-04</span><span>3.403e-04</span><span>4.872e-05</span></LegendLabels>
              </LegendBody>
            </Legend>
          </Viewport>
        </Workspace>
      </Main>

      <StatusBar>有效, 内部名称: Nephogram</StatusBar>

      <Taskbar>
        <TaskSlot $w={60}><WinLogo /></TaskSlot>
        <TaskSlot $w={60}><SearchGlass /></TaskSlot>
        <TaskSlot $w={60}><TaskView /></TaskSlot>
        <TaskSlot $w={62} $ml={3} $state="open"><EdgeIcon /></TaskSlot>
        <TaskSlot $w={62} $state="open"><FolderIcon /></TaskSlot>
        <TaskSlot $w={62}><StoreIcon /></TaskSlot>
        <TaskSlot $w={62}><MailIcon /></TaskSlot>
        <TaskSlot $w={63} $state="open"><SwirlIcon /></TaskSlot>
        <TaskSlot $w={61} $state="active"><SimLogo s={30} /></TaskSlot>
        <Tray>
          <TrayItem $ml={0}><CloudIcon /></TrayItem>
          <TrayText $ml={10} $size={18}>30°C</TrayText>
          <TrayText $ml={11} $size={18}>阴</TrayText>
          <TrayItem $ml={31}><TrayChevron /></TrayItem>
          <TrayItem $ml={12}><BatteryIcon /></TrayItem>
          <TrayItem $ml={13}><WifiIcon /></TrayItem>
          <TrayItem $ml={11}><MuteIcon /></TrayItem>
          <TrayText $ml={10} $size={19}>英</TrayText>
          <Clock>16:37<br />2023/7/1</Clock>
          <TrayItem $ml={31}><NotifyIcon /></TrayItem>
          <TrayItem $ml={20}><span /></TrayItem>
        </Tray>
      </Taskbar>
    </Root>
  );
}
